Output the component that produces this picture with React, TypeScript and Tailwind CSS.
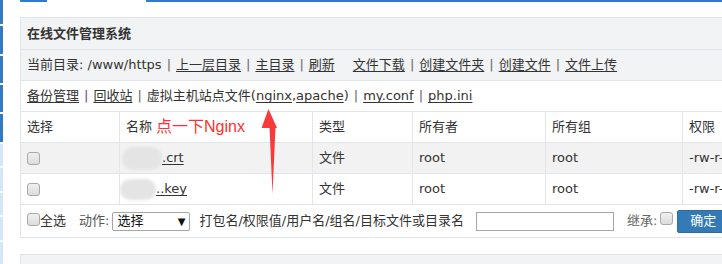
import React from 'react';

const darkSegs = [25, 28, 28, 28, 28];
const lightSegs = [23, 23, 23, 23, 23];

const Sep = () => <span className="mx-[5px] text-[#666]">|</span>;

const Link = ({ children }: { children: React.ReactNode }) => (
    <a className="text-[#333] underline underline-offset-[2px] decoration-[#333] cursor-pointer">{children}</a>
);

const Box = ({ className = '' }: { className?: string }) => (
    <span
        className={`inline-block w-[13px] h-[13px] shrink-0 rounded-[3px] border border-[#a9a9a9] bg-gradient-to-b from-[#f0f0f0] to-[#dcdcdc] ${className}`}
    />
);

const cols = 'grid grid-cols-[99px_193px_100px_133px_137px_1fr]';
const cell = 'flex items-center px-[6px] border-r border-[#e3e5e8] whitespace-nowrap';

const rows = [
    { ext: '.crt', blob: 'w-[40px] h-[23px] -ml-[4px]', bg: 'bg-[#f2f2f2]' },
    { ext: '..key', blob: 'w-[36px] h-[21px] -ml-[6px]', bg: 'bg-white' },
];

export default function App() {
    return (
        <div className="relative w-[722px] h-[264px] overflow-hidden bg-white flex text-[13px] text-[#333] font-['DejaVu_Sans','Noto_Sans_CJK_SC',sans-serif]">
            {/* left side nav strip */}
            <div className="w-[3px] shrink-0 flex flex-col gap-[2px]">
                {darkSegs.map((h, i) => (
                    <div key={'d' + i} className="bg-[#3479c4]" style={{ height: h }} />
                ))}
                {lightSegs.map((h, i) => (
                    <div key={'l' + i} className="bg-[#d6e6f8]" style={{ height: h }} />
                ))}
            </div>

            <div className="flex-1 pl-[17px]">
                {/* tab underline */}
                <div className="flex h-[2px]">
                    <div className="w-[27px] bg-[#2f7bcf]" />
                    <div className="w-[99px]" />
                    <div className="flex-1 bg-[#2f7bcf]" />
                </div>

                <div className="mt-[15px] w-[760px] border border-[#e1e4e8]">
                    <div className="h-[32px] flex items-center px-[6px] bg-[#f2f3f5] border-b border-[#e1e4e8] font-bold">
                        在线文件管理系统
                    </div>

                    <div className="h-[31px] flex items-center px-[6px] bg-[#f2f3f5] border-b border-[#e1e4e8] whitespace-nowrap">
                        <span>当前目录: /www/https</span>
                        <Sep />
                        <Link>上一层目录</Link>
                        <Sep />
                        <Link>主目录</Link>
                        <Sep />
                        <Link>刷新</Link>
                        <span className="ml-[18px]" />
                        <Link>文件下载</Link>
                        <Sep />
                        <Link>创建文件夹</Link>
                        <Sep />
                        <Link>创建文件</Link>
                        <Sep />
                        <Link>文件上传</Link>
                    </div>

                    <div className="h-[31px] flex items-center px-[6px] border-b border-[#e1e4e8] whitespace-nowrap">
                        <Link>备份管理</Link>
                        <span className="mx-[5px] text-[#6b3f8c]">|</span>
                        <Link>回收站</Link>
                        <Sep />
                        <span>虚拟主机站点文件(</span>
                        <Link>nginx</Link>
                        <span>,</span>
                        <Link>apache</Link>
                        <span>)</span>
                        <Sep />
                        <Link>my.conf</Link>
                        <Sep />
                        <Link>php.ini</Link>
                    </div>

                    {/* table */}
                    <div className={`${cols} h-[31px] border-b border-[#e1e4e8]`}>
                        <div className={cell}>选择</div>
                        <div className={cell}>
                            名称
                            <span className="ml-[4px] text-[16px] text-[#ff3030] font-['Liberation_Sans','Noto_Sans_CJK_SC',sans-serif]">
                                点一下Nginx
                            </span>
                        </div>
                        <div className={cell}>类型</div>
                        <div className={cell}>所有者</div>
                        <div className={cell}>所有组</div>
                        <div className={cell}>权限</div>
                    </div>

                    {rows.map((r) => (
                        <div key={r.ext} className={`${cols} h-[31px] border-b border-[#e1e4e8] ${r.bg}`}>
                            <div className={cell}>
                                <Box />
                            </div>
                            <div className={cell}>
                                <span className={`inline-block rounded-full bg-[#e4e4e4] blur-[1.5px] ${r.blob}`} />
                                <Link>{r.ext}</Link>
                            </div>
                            <div className={cell}>文件</div>
                            <div className={cell}>root</div>
                            <div className={cell}>root</div>
                            <div className={cell}>-rw-r--r--</div>
                        </div>
                    ))}

                    <div className="h-[32px] flex items-center px-[6px] whitespace-nowrap">
                        <Box className="-mt-[3px]" />
                        <span>全选</span>
                        <span className="ml-[13px] text-[#555]">动作:</span>
                        <div className="ml-[3px] w-[78px] h-[19px] border border-[#a6a6a6] rounded-[2px] flex items-center justify-between px-[4px] text-[#111]">
                            <span>选择</span>
                            <span className="text-[10px]">▼</span>
                        </div>
                        <span className="ml-[9px]">打包名/权限值/用户名/组名/目标文件或目录名</span>
                        <div className="ml-[12px] w-[138px] h-[19px] border border-[#a6a6a6]" />
                        <span className="ml-[13px] text-[#666]">继承:</span>
                        <Box className="ml-[3px] -mt-[5px]" />
                        <button className="ml-[4px] h-[23px] px-[12px] bg-[#337ab7] border border-[#2e6da4] rounded-[2px] text-white text-[13px]">
                            确定
                        </button>
                    </div>
                </div>

                <div className="mt-[16px] w-[760px] h-[30px] border border-[#e1e4e8] bg-[#f2f3f5]" />
            </div>

            {/* annotation arrow */}
            <svg className="absolute left-[258px] top-[106px]" width="24" height="92" viewBox="258 106 24 92">
                <polygon points="268.5,109 261.5,128 277,128" fill="#f73a3a" />
                <polygon points="269.5,127 275.5,127 272.5,194" fill="#f73a3a" />
            </svg>
        </div>
    );
}
